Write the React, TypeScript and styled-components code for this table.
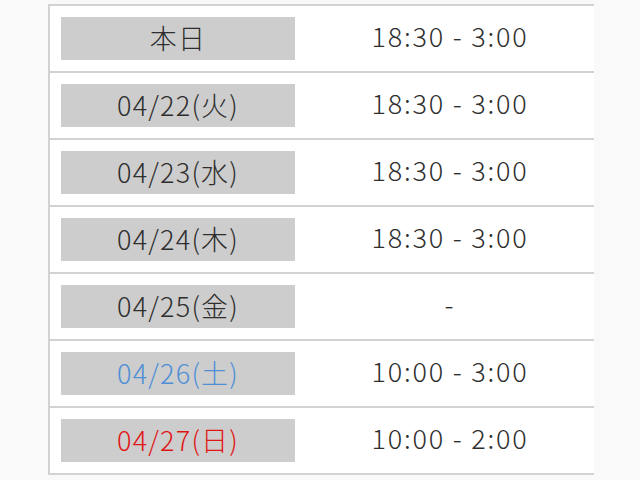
import React from "react";
import styled, { createGlobalStyle } from "styled-components";

const GlobalStyle = createGlobalStyle`
  html, body {
    margin: 0;
    padding: 0;
    background: #f9f9f9;
  }
  body {
    font-family: "Noto Sans CJK JP", "Noto Sans", sans-serif;
    color: #333;
  }
`;

type DayKind = "normal" | "sat" | "sun";

interface Day {
  label: string;
  hours: string;
  kind: DayKind;
}

const days: Day[] = [
  { label: "本日", hours: "18:30 - 3:00", kind: "normal" },
  { label: "04/22(火)", hours: "18:30 - 3:00", kind: "normal" },
  { label: "04/23(水)", hours: "18:30 - 3:00", kind: "normal" },
  { label: "04/24(木)", hours: "18:30 - 3:00", kind: "normal" },
  { label: "04/25(金)", hours: "-", kind: "normal" },
  { label: "04/26(土)", hours: "10:00 - 3:00", kind: "sat" },
  { label: "04/27(日)", hours: "10:00 - 2:00", kind: "sun" },
];

const dayColors: Record<DayKind, string> = {
  normal: "#2e2e2e",
  sat: "#4f8fd6",
  sun: "#e01515",
};

export default function App() {
  return (
    <>
      <GlobalStyle />
      <Page>
        <Schedule>
          {days.map((d) => (
            <Row key={d.label}>
              <DateCell>
                <DateBox kind={d.kind}>{d.label}</DateBox>
              </DateCell>
              <HoursCell>{d.hours}</HoursCell>
            </Row>
          ))}
        </Schedule>
      </Page>
    </>
  );
}

const Page = styled.div`
  padding: 4px 0 0 48px;
  height: 476px;
  overflow: hidden;
`;

const Schedule = styled.div`
  width: 544px;
  background: #fff;
  border-left: 2px solid #d2d2d2;
`;

const Row = styled.div`
  display: grid;
  grid-template-columns: 256px 1fr;
  border-top: 2px solid #d2d2d2;
  &:last-child {
    border-bottom: 2px solid #d2d2d2;
  }
`;

const DateCell = styled.div`
  padding: 11px;
`;

const DateBox = styled.div<{ kind: DayKind }>`
  height: 43px;
  background: #cdcdcd;
  display: flex;
  align-items: center;
  justify-content: center;
  padding-bottom: 3px;
  box-sizing: border-box;
  font-size: 27px;
  font-weight: 300;
  line-height: 1;
  letter-spacing: 1.2px;
  color: ${({ kind }) => dayColors[kind]};
`;

const HoursCell = styled.div`
  display: flex;
  align-items: center;
  justify-content: center;
  padding-bottom: 7px;
  font-size: 27px;
  font-weight: 300;
  line-height: 1;
  letter-spacing: 1.8px;
  color: #2e2e2e;
`;
